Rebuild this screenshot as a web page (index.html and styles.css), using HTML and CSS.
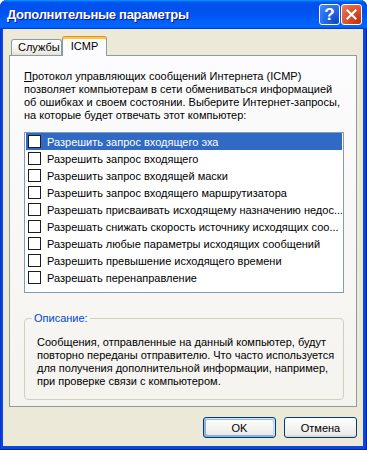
FILE: index.html
```html
<!DOCTYPE html>
<html lang="ru">
<head>
  <meta charset="UTF-8">
  <title>Дополнительные параметры</title>
  <link rel="stylesheet" href="styles.css">
</head>
<body>
  <div class="window">
    <div class="titlebar">
      <span class="title">Дополнительные параметры</span>
      <div class="caption-buttons">
        <div class="cap help">?</div>
        <div class="cap close">
          <svg width="11" height="11" viewBox="0 0 11 11">
            <path d="M1.5 1.5 L9.5 9.5 M9.5 1.5 L1.5 9.5" stroke="#fff" stroke-width="2.2" stroke-linecap="square"/>
          </svg>
        </div>
      </div>
    </div>

    <div class="client">
      <div class="tabs">
        <div class="tab">Службы</div>
        <div class="tab active">ICMP</div>
      </div>

      <div class="panel">
        <p class="intro">
          <u>П</u>ротокол управляющих сообщений Интернета (ICMP)<br>
          позволяет компьютерам в сети обмениваться информацией<br>
          об ошибках и своем состоянии. Выберите Интернет-запросы,<br>
          на которые будет отвечать этот компьютер:
        </p>

        <div class="list">
          <div class="row selected"><span class="check"></span>Разрешить запрос входящего эха</div>
          <div class="row"><span class="check"></span>Разрешить запрос входящего</div>
          <div class="row"><span class="check"></span>Разрешить запрос входящей маски</div>
          <div class="row"><span class="check"></span>Разрешить запрос входящего маршрутизатора</div>
          <div class="row"><span class="check"></span>Разрешать присваивать исходящему назначению недос...</div>
          <div class="row"><span class="check"></span>Разрешать снижать скорость источнику исходящих соо...</div>
          <div class="row"><span class="check"></span>Разрешать любые параметры исходящих сообщений</div>
          <div class="row"><span class="check"></span>Разрешить превышение исходящего времени</div>
          <div class="row"><span class="check"></span>Разрешать перенаправление</div>
        </div>

        <fieldset class="group">
          <legend>Описание:</legend>
          <p class="desc">
            Сообщения, отправленные на данный компьютер, будут<br>
            повторно переданы отправителю. Что часто используется<br>
            для получения дополнительной информации, например,<br>
            при проверке связи с компьютером.
          </p>
        </fieldset>
      </div>

      <div class="buttons">
        <button class="btn default">OK</button>
        <button class="btn">Отмена</button>
      </div>
    </div>
  </div>
</body>
</html>
```

FILE: styles.css
```css
body {
  margin: 0;
  font-family: "Liberation Sans", Arial, sans-serif;
  font-size: 11px;
  color: #000;
  background: #fff;
}
.window {
  width: 367px;
  height: 450px;
  display: flex;
  flex-direction: column;
  background: #0a48dc;
  border-radius: 7px 7px 0 0;
  box-shadow: inset 1px 0 #0831d9, inset -1px 0 #001ea0, inset 0 -1px #001ea0;
  overflow: hidden;
}
.titlebar {
  height: 29px;
  flex: none;
  display: flex;
  align-items: center;
  padding: 0 5px 0 7px;
  background: linear-gradient(180deg, #0997ff, #0053ee 8%, #0050ee 40%, #0066ff 88%, #0066ff 93%, #005bff 95%, #003dd7 96%, #003dd7);
  color: #fff;
}
.title {
  flex: 1;
  font-weight: bold;
  font-size: 13px;
  letter-spacing: -0.3px;
  text-shadow: 1px 1px #0f1089;
}
.caption-buttons {
  display: flex;
  gap: 1px;
}
.cap {
  width: 19px;
  height: 19px;
  border: 1px solid #fff;
  border-radius: 3px;
  display: flex;
  align-items: center;
  justify-content: center;
}
.help {
  background: radial-gradient(circle at 85% 85%, #0f47c9, #2a6ef0 60%, #4d8cf7);
  font-weight: bold;
  font-size: 17px;
  line-height: 1;
}
.close {
  background: radial-gradient(circle at 85% 85%, #c2320f, #e05a35 60%, #eb8263);
}
.client {
  flex: 1;
  margin: 0 4px 4px 3px;
  padding: 7px 6px 0 6px;
  background: #ece9d8;
  display: flex;
  flex-direction: column;
}
.tabs {
  height: 20px;
  flex: none;
  display: flex;
  align-items: flex-start;
  padding-left: 2px;
  margin-bottom: -1px;
  position: relative;
  z-index: 1;
}
.tab {
  height: 16px;
  margin-top: 3px;
  padding: 0 6px;
  border: 1px solid #919b9c;
  border-bottom: none;
  border-radius: 3px 3px 0 0;
  background: linear-gradient(180deg, #fff, #f3f2ed 70%, #e3e1d7);
  line-height: 15px;
  box-sizing: border-box;
  width: 51px;
  text-align: center;
}
.tab.active {
  width: 45px;
  height: 20px;
  margin-top: 0;
  border-top: 1px solid #e68b2c;
  box-shadow: inset 0 2px #ffc73c;
  background: #fcfcfe;
  line-height: 18px;
}
.panel {
  height: 352px;
  flex: none;
  box-sizing: border-box;
  border: 1px solid #919b9c;
  background: linear-gradient(180deg, #fcfcfe, #f4f3ee);
  padding: 14px 12px 6px 14px;
  display: flex;
  flex-direction: column;
}
.intro {
  margin: 0;
  line-height: 13px;
  white-space: nowrap;
}
.list {
  flex: none;
  margin-top: 10px;
  height: 161px;
  box-sizing: border-box;
  border: 1px solid #7f9db9;
  background: #fff;
  padding: 0 1px;
}
.row {
  height: 17px;
  display: flex;
  align-items: center;
  gap: 6px;
  padding-left: 2px;
  white-space: nowrap;
  overflow: hidden;
}
.row.selected {
  background: #316ac5;
  color: #fff;
}
.check {
  flex: none;
  width: 13px;
  height: 13px;
  box-sizing: border-box;
  border: 1px solid #1c1c1c;
  background: #fff;
}
.group {
  flex: none;
  margin: 19px 0 0;
  padding: 11px 12px 11px 12px;
  border: 1px solid #d0d0bf;
  border-radius: 4px;
  min-width: 0;
}
.group legend {
  color: #0046d5;
  padding: 0 2px;
  margin-left: -5px;
  line-height: 13px;
}
.desc {
  margin: 0;
  line-height: 13px;
  white-space: nowrap;
}
.buttons {
  display: flex;
  justify-content: flex-end;
  gap: 8px;
  margin-top: 10px;
}
.btn {
  width: 73px;
  height: 21px;
  font-family: inherit;
  font-size: 11px;
  color: #000;
  border: 1px solid #003c74;
  border-radius: 3px;
  background: linear-gradient(180deg, #fff, #ecebe6 86%, #d6d0c5);
  padding: 0;
}
.btn.default {
  box-shadow: inset -1px 1px #cee7ff, inset 1px 2px #98b8ea, inset -2px 2px #bcd4f6, inset 1px -1px #89ade4, inset 2px -2px #89ade4;
}
```
